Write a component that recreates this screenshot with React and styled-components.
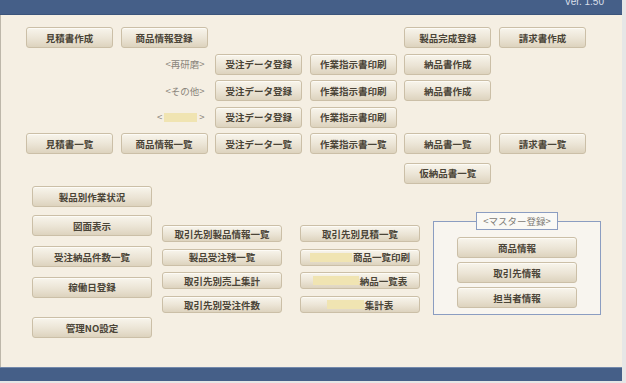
import React from "react";
import styled, { createGlobalStyle } from "styled-components";

const GlobalStyle = createGlobalStyle`
  html, body {
    margin: 0;
    padding: 0;
    background: #ffffff;
  }
  body {
    font-family: "Noto Sans CJK JP", "Noto Sans", sans-serif;
  }
`;

const Frame = styled.div`
  width: 626px;
  height: 383px;
  box-sizing: border-box;
  border-right: 4px solid #e6e6e6;
  border-bottom: 2px solid #e6e6e6;
  display: flex;
  flex-direction: column;
  overflow: hidden;
`;

const TitleBar = styled.div`
  height: 15px;
  flex: none;
  background: #455f88;
  border-bottom: 1px solid #3b547b;
  box-sizing: border-box;
  display: flex;
  justify-content: flex-end;
  align-items: flex-start;
  padding-right: 18px;
`;

const Version = styled.span`
  font-family: "Liberation Sans", Arial, sans-serif;
  font-size: 10px;
  line-height: 10px;
  margin-top: -3px;
  color: #d9dfea;
`;

const Main = styled.div`
  flex: 1;
  background: #f5efe3;
  border-left: 1px solid #bdb7aa;
  padding: 12px 0 0 25px;
  box-sizing: border-box;
`;

const BottomBar = styled.div`
  height: 14px;
  flex: none;
  background: #455f88;
  border-top: 1px solid #7389ab;
  box-sizing: border-box;
`;

const TopGrid = styled.div`
  display: grid;
  grid-template-columns: repeat(6, 87px);
  grid-template-rows: repeat(5, 21px) 24px;
  column-gap: 7.6px;
  row-gap: 5.5px;
  align-items: end;
`;

const Button = styled.button`
  grid-column: ${(p) => p.$col || "auto"};
  grid-row: ${(p) => p.$row || "auto"};
  width: ${(p) => p.$w || "100%"};
  height: ${(p) => p.$h || "21px"};
  margin: 0;
  margin-top: ${(p) => p.$mt || "0"};
  padding: 0;
  box-sizing: border-box;
  border: 1px solid #cbbfa7;
  border-radius: 3px;
  background: linear-gradient(#f8f5ec, #ebe4d5 55%, #ddd3be);
  box-shadow: inset 0 1px 0 #fdfbf6;
  font-family: "Noto Sans CJK JP", "Noto Sans", sans-serif;
  font-size: 9.5px;
  font-weight: 700;
  color: #4a4437;
  display: flex;
  align-items: center;
  justify-content: center;
  gap: 1px;
  cursor: pointer;
`;

const Label = styled.div`
  grid-column: ${(p) => p.$col};
  grid-row: ${(p) => p.$row};
  align-self: center;
  justify-self: end;
  padding-right: 3px;
  display: flex;
  align-items: center;
  font-size: 9.5px;
  color: #8a857b;
`;

const Blank = styled.span`
  display: inline-block;
  width: ${(p) => p.$w}px;
  height: 9px;
  background: #f0e4b2;
  margin: 0 ${(p) => p.$gap || 0}px;
`;

const Lower = styled.div`
  display: flex;
  align-items: flex-start;
  margin-top: 2.5px;
  padding-left: 6px;
`;

const LeftColumn = styled.div`
  display: flex;
  flex-direction: column;
  width: 120px;
`;

const ReportGrid = styled.div`
  display: grid;
  grid-template-columns: 120px 120px;
  column-gap: 18px;
  row-gap: 6.7px;
  margin: 39px 0 0 10px;
`;

const MasterBox = styled.fieldset`
  margin: 26px 0 0 13px;
  padding: 0 23px 6px;
  width: 168px;
  box-sizing: border-box;
  border: 1px solid #8b9dc1;
  background: #f8f5ef;
  display: flex;
  flex-direction: column;
  gap: 4px;
`;

const MasterLegend = styled.legend`
  width: 82px;
  height: 18px;
  padding: 0;
  box-sizing: border-box;
  border: 1px solid #8b9dc1;
  background: #faf9f5;
  font-size: 9.5px;
  line-height: 16px;
  text-align: center;
  color: #7d7a74;
`;

const leftItems = [
  { text: "製品別作業状況", mt: "0" },
  { text: "図面表示", mt: "8px" },
  { text: "受注納品件数一覧", mt: "10px" },
  { text: "稼働日登録", mt: "9.5px" },
  { text: "管理NO設定", mt: "19.5px" },
];

export default function App() {
  return (
    <>
      <GlobalStyle />
      <Frame>
        <TitleBar>
          <Version>Ver. 1.50</Version>
        </TitleBar>
        <Main>
          <TopGrid>
            <Button $col="1" $row="1">見積書作成</Button>
            <Button $col="2" $row="1">商品情報登録</Button>
            <Button $col="5" $row="1">製品完成登録</Button>
            <Button $col="6" $row="1">請求書作成</Button>

            <Label $col="2" $row="2">&lt;再研磨&gt;</Label>
            <Button $col="3" $row="2">受注データ登録</Button>
            <Button $col="4" $row="2">作業指示書印刷</Button>
            <Button $col="5" $row="2">納品書作成</Button>

            <Label $col="2" $row="3">&lt;その他&gt;</Label>
            <Button $col="3" $row="3">受注データ登録</Button>
            <Button $col="4" $row="3">作業指示書印刷</Button>
            <Button $col="5" $row="3">納品書作成</Button>

            <Label $col="2" $row="4">
              &lt;<Blank $w={33} $gap={2} />&gt;
            </Label>
            <Button $col="3" $row="4">受注データ登録</Button>
            <Button $col="4" $row="4">作業指示書印刷</Button>

            <Button $col="1" $row="5">見積書一覧</Button>
            <Button $col="2" $row="5">商品情報一覧</Button>
            <Button $col="3" $row="5">受注データ一覧</Button>
            <Button $col="4" $row="5">作業指示書一覧</Button>
            <Button $col="5" $row="5">納品書一覧</Button>
            <Button $col="6" $row="5">請求書一覧</Button>

            <Button $col="5" $row="6">仮納品書一覧</Button>
          </TopGrid>

          <Lower>
            <LeftColumn>
              {leftItems.map((item) => (
                <Button key={item.text} $mt={item.mt}>
                  {item.text}
                </Button>
              ))}
            </LeftColumn>

            <ReportGrid>
              <Button $h="17px">取引先別製品情報一覧</Button>
              <Button $h="17px">取引先別見積一覧</Button>
              <Button $h="17px">製品受注残一覧</Button>
              <Button $h="17px">
                <Blank $w={42} />
                商品一覧印刷
              </Button>
              <Button $h="17px">取引先別売上集計</Button>
              <Button $h="17px">
                <Blank $w={46} />
                納品一覧表
              </Button>
              <Button $h="17px">取引先別受注件数</Button>
              <Button $h="17px">
                <Blank $w={37} />
                集計表
              </Button>
            </ReportGrid>

            <MasterBox>
              <MasterLegend>&lt;マスター登録&gt;</MasterLegend>
              <Button $mt="7px">商品情報</Button>
              <Button>取引先情報</Button>
              <Button>担当者情報</Button>
            </MasterBox>
          </Lower>
        </Main>
        <BottomBar />
      </Frame>
    </>
  );
}
